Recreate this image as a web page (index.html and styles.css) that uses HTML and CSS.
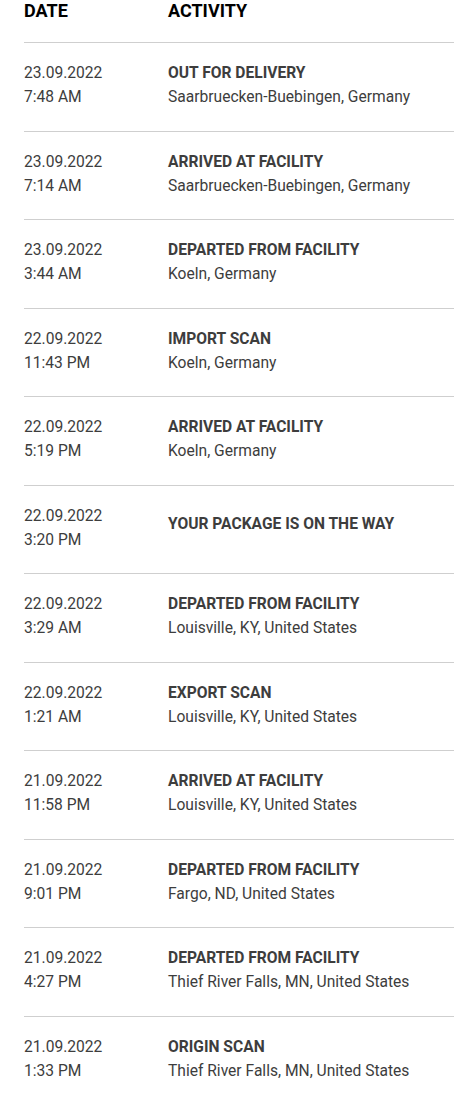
FILE: index.html
```html
<!DOCTYPE html>
<html>
<head>
<meta charset="utf-8">
<link rel="stylesheet" href="styles.css">
</head>
<body>
<div class="table">
  <div class="head">
    <div class="c-date">DATE</div>
    <div class="c-act">ACTIVITY</div>
  </div>
  <div class="row"><div class="c-date">23.09.2022<br>7:48 AM</div><div class="c-act"><div class="title">OUT FOR DELIVERY</div><div>Saarbruecken-Buebingen, Germany</div></div></div>
  <div class="row"><div class="c-date">23.09.2022<br>7:14 AM</div><div class="c-act"><div class="title">ARRIVED AT FACILITY</div><div>Saarbruecken-Buebingen, Germany</div></div></div>
  <div class="row"><div class="c-date">23.09.2022<br>3:44 AM</div><div class="c-act"><div class="title">DEPARTED FROM FACILITY</div><div>Koeln, Germany</div></div></div>
  <div class="row"><div class="c-date">22.09.2022<br>11:43 PM</div><div class="c-act"><div class="title">IMPORT SCAN</div><div>Koeln, Germany</div></div></div>
  <div class="row"><div class="c-date">22.09.2022<br>5:19 PM</div><div class="c-act"><div class="title">ARRIVED AT FACILITY</div><div>Koeln, Germany</div></div></div>
  <div class="row"><div class="c-date">22.09.2022<br>3:20 PM</div><div class="c-act single"><div class="title">YOUR PACKAGE IS ON THE WAY</div></div></div>
  <div class="row"><div class="c-date">22.09.2022<br>3:29 AM</div><div class="c-act"><div class="title">DEPARTED FROM FACILITY</div><div>Louisville, KY, United States</div></div></div>
  <div class="row"><div class="c-date">22.09.2022<br>1:21 AM</div><div class="c-act"><div class="title">EXPORT SCAN</div><div>Louisville, KY, United States</div></div></div>
  <div class="row"><div class="c-date">21.09.2022<br>11:58 PM</div><div class="c-act"><div class="title">ARRIVED AT FACILITY</div><div>Louisville, KY, United States</div></div></div>
  <div class="row"><div class="c-date">21.09.2022<br>9:01 PM</div><div class="c-act"><div class="title">DEPARTED FROM FACILITY</div><div>Fargo, ND, United States</div></div></div>
  <div class="row"><div class="c-date">21.09.2022<br>4:27 PM</div><div class="c-act"><div class="title">DEPARTED FROM FACILITY</div><div>Thief River Falls, MN, United States</div></div></div>
  <div class="row"><div class="c-date">21.09.2022<br>1:33 PM</div><div class="c-act"><div class="title">ORIGIN SCAN</div><div>Thief River Falls, MN, United States</div></div></div>
</div>
</body>
</html>
```
FILE: styles.css
```css
html, body {
  margin: 0;
  padding: 0;
  background: #fff;
}
body {
  font-family: Roboto, "Liberation Sans", sans-serif;
  color: #3d3d3d;
}
.table {
  padding-left: 24px;
}
.head {
  display: flex;
  font-size: 18px;
  font-weight: 700;
  line-height: 22px;
  color: #000;
  padding-bottom: 20px;
  border-bottom: 1px solid #cfcfcf;
}
.c-date {
  width: 144px;
  flex: none;
}
.c-act {
  flex: 1;
}
.row {
  display: flex;
  font-size: 15.6px;
  line-height: 24px;
  padding: 18px 0 21.5px;
  border-bottom: 1px solid #cfcfcf;
}
.row:last-child {
  border-bottom: none;
}
.title {
  font-weight: 700;
}
.single {
  display: flex;
  align-items: center;
  padding-bottom: 7px;
}
```
